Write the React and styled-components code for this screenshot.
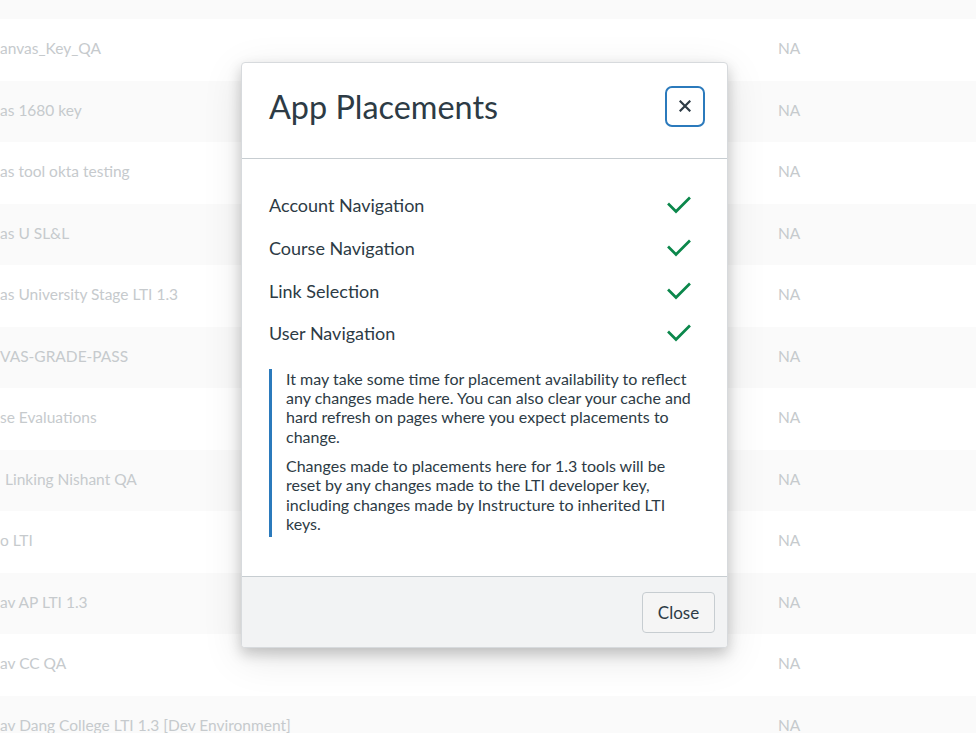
import React from "react";
import styled, { createGlobalStyle } from "styled-components";

const Global = createGlobalStyle`
  html, body { margin: 0; padding: 0; background: #fff; }
  body { font-family: Lato, "Open Sans", sans-serif; overflow: hidden; }
  * { box-sizing: border-box; }
`;

const Page = styled.div`
  width: 976px;
  height: 733px;
  overflow: hidden;
  position: relative;
  background: #fff;
`;

const TopBand = styled.div`
  height: 19px;
  background: #fafafa;
`;

const Row = styled.div`
  height: 61.5px;
  display: grid;
  grid-template-columns: 778px 1fr;
  align-items: center;
  padding-bottom: 3px;
  background: ${(p) => (p.$striped ? "#fafafa" : "#fff")};
  font-size: 15.5px;
  color: #c6cacd;
  white-space: nowrap;
`;

const Name = styled.span`
  padding-left: ${(p) => p.$indent || 0}px;
`;

const Overlay = styled.div`
  position: absolute;
  inset: 0;
  display: flex;
  justify-content: center;
  padding-top: 62px;
  padding-right: 7px;
`;

const Modal = styled.div`
  width: 487px;
  height: 586px;
  background: #fff;
  border: 1px solid #d7dadd;
  border-radius: 4px;
  box-shadow: 0 6px 14px rgba(0, 0, 0, 0.2), 0 10px 40px rgba(0, 0, 0, 0.1);
  display: flex;
  flex-direction: column;
  overflow: hidden;
  color: #2d3b45;
`;

const Header = styled.div`
  height: 96px;
  flex: none;
  display: flex;
  align-items: center;
  justify-content: space-between;
  padding: 0 22px 6px 27px;
  border-bottom: 1px solid #c7cdd1;
`;

const Title = styled.h2`
  margin: 0;
  font-size: 32.4px;
  font-weight: 400;
  line-height: 1;
`;

const CloseX = styled.button`
  width: 40px;
  height: 41px;
  border: 2px solid #2b7abc;
  border-radius: 7px;
  background: #fff;
  display: flex;
  align-items: center;
  justify-content: center;
  padding: 0;
  margin-top: -3px;
`;

const Body = styled.div`
  flex: 1;
  padding: 25px 36px 0 27px;
`;

const Item = styled.div`
  height: 42.7px;
  display: flex;
  align-items: center;
  justify-content: space-between;
  font-size: 18px;
`;

const Notice = styled.div`
  margin-top: 14px;
  border-left: 3px solid #2b7abc;
  padding: 0 0 4px 14px;
  font-size: 16px;
  line-height: 19.3px;
  margin-right: -13px;
`;

const Para = styled.p`
  margin: 0 0 ${(p) => (p.$last ? 0 : 10)}px;
`;

const Footer = styled.div`
  height: 71px;
  flex: none;
  background: #f2f3f4;
  border-top: 1px solid #c7cdd1;
  display: flex;
  align-items: center;
  justify-content: flex-end;
  padding: 0 12px 0 0;
`;

const Button = styled.button`
  width: 73px;
  height: 41px;
  background: #f5f5f5;
  border: 1px solid #c7cdd1;
  border-radius: 4px;
  font-family: Lato, sans-serif;
  font-size: 17px;
  color: #2d3b45;
  padding: 0;
`;

const Check = () => (
  <svg width="24" height="20" viewBox="0 0 24 20">
    <polyline
      points="2,9.5 9,16.5 22,3.5"
      fill="none"
      stroke="#0b874b"
      strokeWidth="2.7"
      strokeLinecap="square"
    />
  </svg>
);

const XIcon = () => (
  <svg width="12" height="12" viewBox="0 0 12 12">
    <path d="M1.5 1.5 L10.5 10.5 M10.5 1.5 L1.5 10.5" stroke="#2d3b45" strokeWidth="2.2" strokeLinecap="square" />
  </svg>
);

const rows = [
  ["anvas_Key_QA"],
  ["as 1680 key"],
  ["as tool okta testing"],
  ["as U SL&L"],
  ["as University Stage LTI 1.3"],
  ["VAS-GRADE-PASS"],
  ["se Evaluations"],
  ["Linking Nishant QA", 5],
  ["o LTI"],
  ["av AP LTI 1.3"],
  ["av CC QA"],
  ["av Dang College LTI 1.3 [Dev Environment]"],
];

const placements = ["Account Navigation", "Course Navigation", "Link Selection", "User Navigation"];

export default function App() {
  return (
    <Page>
      <Global />
      <TopBand />
      {rows.map(([name, indent], i) => (
        <Row key={i} $striped={i % 2 === 1}>
          <Name $indent={indent}>{name}</Name>
          <span>NA</span>
        </Row>
      ))}
      <Overlay>
        <Modal>
          <Header>
            <Title>App Placements</Title>
            <CloseX aria-label="Close">
              <XIcon />
            </CloseX>
          </Header>
          <Body>
            {placements.map((p) => (
              <Item key={p}>
                <span>{p}</span>
                <Check />
              </Item>
            ))}
            <Notice>
              <Para>
                It may take some time for placement availability to reflect any changes made here. You can also clear
                your cache and hard refresh on pages where you expect placements to change.
              </Para>
              <Para $last>
                Changes made to placements here for 1.3 tools will be reset by any changes made to the LTI developer key,
                including changes made by Instructure to inherited LTI keys.
              </Para>
            </Notice>
          </Body>
          <Footer>
            <Button>Close</Button>
          </Footer>
        </Modal>
      </Overlay>
    </Page>
  );
}
